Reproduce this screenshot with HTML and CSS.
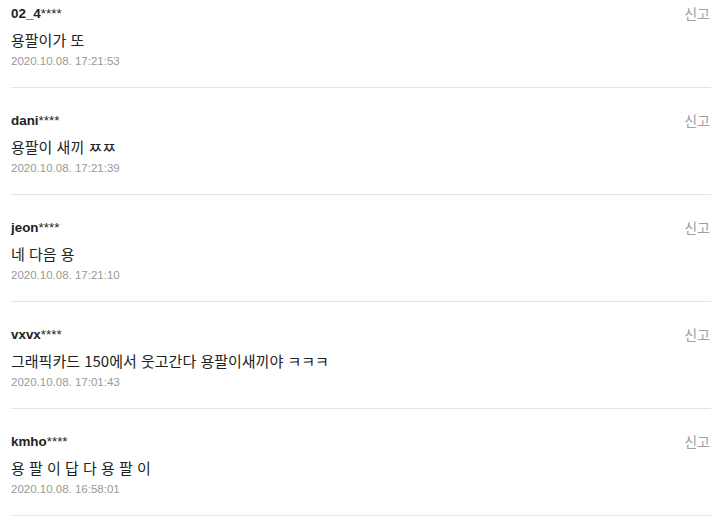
FILE: index.html
```html
<!DOCTYPE html>
<html lang="ko">
<head>
  <meta charset="UTF-8">
  <meta name="viewport" content="width=device-width, initial-scale=1.0">
  <title>댓글</title>
  <link rel="stylesheet" href="styles.css">
</head>
<body>
  <ul class="comments">
    <li class="comment">
      <div class="comment-head">
        <span class="nick"><b>02_4</b>****</span>
        <a class="report" href="#">신고</a>
      </div>
      <p class="text">용팔이가 또</p>
      <span class="date">2020.10.08. 17:21:53</span>
    </li>
    <li class="comment">
      <div class="comment-head">
        <span class="nick"><b>dani</b>****</span>
        <a class="report" href="#">신고</a>
      </div>
      <p class="text">용팔이 새끼 ㅉㅉ</p>
      <span class="date">2020.10.08. 17:21:39</span>
    </li>
    <li class="comment">
      <div class="comment-head">
        <span class="nick"><b>jeon</b>****</span>
        <a class="report" href="#">신고</a>
      </div>
      <p class="text">네 다음 용</p>
      <span class="date">2020.10.08. 17:21:10</span>
    </li>
    <li class="comment">
      <div class="comment-head">
        <span class="nick"><b>vxvx</b>****</span>
        <a class="report" href="#">신고</a>
      </div>
      <p class="text">그래픽카드 150에서 웃고간다 용팔이새끼야 ㅋㅋㅋ</p>
      <span class="date">2020.10.08. 17:01:43</span>
    </li>
    <li class="comment">
      <div class="comment-head">
        <span class="nick"><b>kmho</b>****</span>
        <a class="report" href="#">신고</a>
      </div>
      <p class="text">용 팔 이 답 다 용 팔 이</p>
      <span class="date">2020.10.08. 16:58:01</span>
    </li>
  </ul>
</body>
</html>
```

FILE: styles.css
```css
body {
  margin: 0;
  background: #fff;
  font-family: "Liberation Sans", "Noto Sans CJK KR", sans-serif;
  color: #000;
}
.comments {
  list-style: none;
  margin: 0;
  padding: 0 16px 0 11px;
}
.comment {
  padding: 24px 0 18px;
  border-bottom: 1px solid #e4e4e4;
}
.comment:first-child {
  padding-top: 5px;
}
.comment-head {
  display: flex;
  justify-content: space-between;
  align-items: center;
  height: 18px;
}
.nick {
  font-size: 13.4px;
  line-height: 18px;
  color: #222;
}
.nick b {
  font-weight: bold;
}
.report {
  font-family: "Noto Sans CJK KR", sans-serif;
  font-size: 14px;
  line-height: 18px;
  color: #a0a0a0;
  text-decoration: none;
  margin-top: -2px;
  margin-right: 1px;
}
.text {
  margin: 7px 0 3px;
  font-family: "Noto Sans CJK KR", sans-serif;
  font-size: 15px;
  line-height: 20px;
  color: #222;
}
.date {
  display: block;
  font-size: 11.5px;
  line-height: 16px;
  color: #999;
}
```
